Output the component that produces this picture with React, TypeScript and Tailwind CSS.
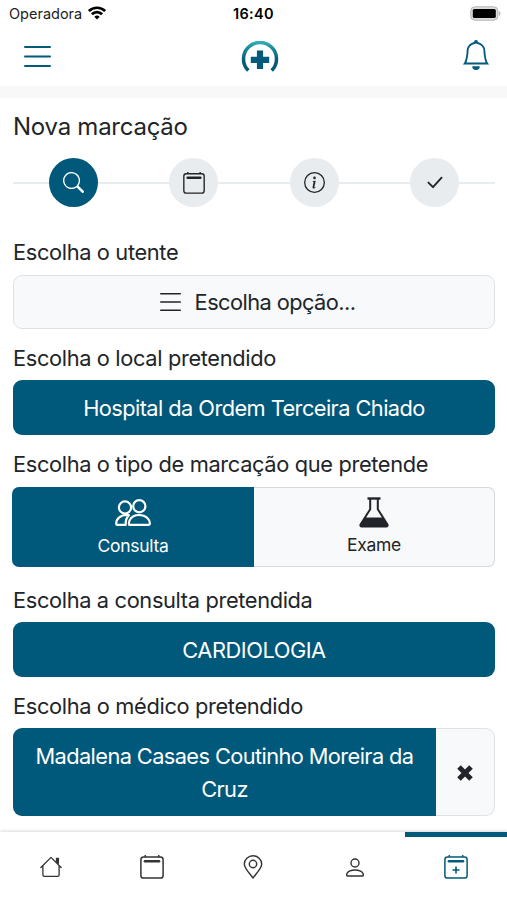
import type { ReactNode } from "react";
import { BsSearch, BsInfoCircle, BsBell } from "react-icons/bs";

function Wifi() {
  return (
    <svg className="-mt-0.5" width="18" height="14" viewBox="0 0 18 14" fill="none" stroke="#000" strokeWidth="2.700">
      <path d="M0.9 5.1a11.5 11.5 0 0 1 16.2 0" />
      <path d="M3.9 8.2a7.2 7.2 0 0 1 10.2 0" />
      <path d="M9 13.6 6.3 10.8a3.9 3.9 0 0 1 5.4 0z" fill="#000" stroke="none" />
    </svg>
  );
}

function Battery() {
  return (
    <svg className="-mt-0.5" width="31" height="15" viewBox="0 0 31 15">
      <rect x="0.8" y="0.8" width="27" height="13.4" rx="4" fill="#ddd" stroke="#b5b5b5" strokeWidth="1" />
      <rect x="2.8" y="2.9" width="23" height="9.2" rx="1.6" fill="#000" />
      <path d="M28.9 5v5c1-.4 1.6-1.4 1.6-2.500S29.900 5.400 28.900 5z" fill="#b5b5b5" />
    </svg>
  );
}

function Lines({ className, width, height, stroke }: { className?: string; width: number; height: number; stroke: number }) {
  const inset = stroke / 2;
  return (
    <svg className={className} width={width} height={height} fill="none" stroke="currentColor" strokeWidth={stroke} strokeLinecap="round">
      <path d={`M${inset} ${inset}H${width - inset}M${inset} ${height / 2}H${width - inset}M${inset} ${height - inset}H${width - inset}`} />
    </svg>
  );
}

function Logo() {
  return (
    <svg width="38" height="32" viewBox="0 0 38 32" fill="none">
      <defs>
        <linearGradient id="arc" x1="19" y1="0" x2="19" y2="20" gradientUnits="userSpaceOnUse">
          <stop offset="0" stopColor="#33b5b5" />
          <stop offset="0.45" stopColor="#168394" />
          <stop offset="1" stopColor="#035a7b" />
        </linearGradient>
      </defs>
      <path d="M7.300 29.600A16.500 16.500 0 1 1 30.700 29.600" stroke="url(#arc)" strokeWidth="3.500" />
      <path d="M15.900 9.600h6.200v6.100h6.100v6.200h-6.100v6.100h-6.200v-6.100H9.800v-6.200h6.100z" fill="#035a7b" />
    </svg>
  );
}

function Calendar({ size, plus = false }: { size: number; plus?: boolean }) {
  return (
    <svg width={size} height={size} viewBox="0 0 24 24" fill="none" stroke="currentColor" strokeWidth="1.500">
      <rect x="0.900" y="1.900" width="22.200" height="21.200" rx="2.600" />
      <path d="M5.300 0v2M18.700 0v2" />
      <path d="M5 6.300h14" strokeWidth="2.600" strokeLinecap="round" />
      {plus && <path d="M12 11.500v7M8.500 15h7" strokeWidth="1.600" />}
    </svg>
  );
}

function Check() {
  return (
    <svg width="16" height="13" viewBox="0 0 16 13" fill="none" stroke="currentColor" strokeWidth="1.900" strokeLinecap="round" strokeLinejoin="round">
      <path d="M1.400 6.600 6 11.200 14.600 1.700" />
    </svg>
  );
}

function People() {
  return (
    <svg width="36" height="28" viewBox="0 0 36 28" fill="none" stroke="currentColor" strokeWidth="2.200" strokeLinejoin="round">
      <circle cx="10" cy="8.500" r="6.100" />
      <circle cx="24.300" cy="7.200" r="6.100" />
      <path d="M14.200 25.900c-.9-2.600.5-6.600 4.200-8.600 1.500-.8 3.300-1.300 5.800-1.300 7 0 10.700 4.600 10.700 8.600 0 .9-.5 1.300-1.300 1.300z" />
      <path d="M13.800 16.100C6 14.700 1.200 20.100 1.200 24.700c0 .8.400 1.200 1.200 1.200h8.300c-.2-4 .7-7.400 3.100-9.800z" />
    </svg>
  );
}

function Flask() {
  return (
    <svg width="30" height="31" viewBox="0 0 30 31" fill="none" stroke="currentColor" strokeLinejoin="round">
      <path d="M8.500 1.500h13" strokeWidth="2.400" />
      <path d="M11.200 2v10.300L1.700 27.200c-.7 1.200-.2 2.300 1.100 2.300h24.400c1.300 0 1.800-1.100 1.100-2.300L18.800 12.300V2" strokeWidth="2" />
      <path d="M6.300 20.600h17.400l5 7.400-1.200 1.700H2.500L1.300 28z" fill="currentColor" stroke="none" />
    </svg>
  );
}

function Cross() {
  return (
    <svg width="16" height="16" viewBox="0 0 16 16" stroke="currentColor" strokeWidth="5">
      <path d="M2 2 14 14M14 2 2 14" />
    </svg>
  );
}

function House() {
  return (
    <svg className="ml-px" width="22" height="22" viewBox="0 0 22 22" fill="none" stroke="currentColor" strokeWidth="1.300" strokeLinecap="round" strokeLinejoin="round">
      <path d="M.9 11.500 11 1.400l10.100 10.100M2.900 10v9.100c0 .8.500 1.300 1.300 1.300h13.600c.8 0 1.300-.5 1.300-1.300V10" />
      <path d="M16.500 2.300h1.900v5l-1.900-1.900z" fill="currentColor" />
    </svg>
  );
}

function Pin() {
  return (
    <svg width="20" height="24" viewBox="0 0 20 24" fill="none" stroke="currentColor" strokeWidth="1.400" strokeLinejoin="round">
      <path d="M10 23C7 18.600 1.300 13.600 1.300 9a8.700 8.300 0 0 1 17.400 0C18.700 13.600 13 18.600 10 23z" />
      <circle cx="10" cy="9" r="3.700" />
    </svg>
  );
}

function Person() {
  return (
    <svg width="18" height="19" viewBox="0 0 18 19" fill="none" stroke="currentColor" strokeWidth="1.400" strokeLinejoin="round">
      <circle cx="9" cy="5" r="4" />
      <path d="M1.700 18C.3 18 .5 16.500 1.200 15.200 2.500 12.900 5.500 12 9 12s6.500.9 7.800 3.200c.7 1.300.9 2.800-.5 2.800z" />
    </svg>
  );
}

function Step({ active = false, children }: { active?: boolean; children: ReactNode }) {
  return (
    <div className={`z-10 flex size-[49px] items-center justify-center rounded-full ${active ? "bg-[#00587a] text-white" : "bg-[#e9ecef] text-[#212529]"}`}>
      {children}
    </div>
  );
}

function Label({ className, children }: { className: string; children: ReactNode }) {
  return <h2 className={`flex h-[30px] shrink-0 items-center text-[21.8px] font-normal tracking-[-0.35px] whitespace-nowrap ${className}`}>{children}</h2>;
}

function Tab({ active = false, children }: { active?: boolean; children: ReactNode }) {
  return (
    <a className={`flex items-center justify-center border-t-[5px] pb-[3px] ${active ? "-ml-px border-[#035a7b] text-[#035a7b]" : "border-transparent"}`}>
      {children}
    </a>
  );
}

export default function App() {
  return (
    <div className="flex h-[900px] w-[507px] flex-col overflow-hidden bg-white font-['Inter','Liberation_Sans',sans-serif] text-[#212529]">
      <div className="grid h-7 shrink-0 grid-cols-3 items-center pr-[6px] pl-[9px] text-[14.5px] text-[#222]">
        <div className="flex items-center gap-[6px]">
          <span>Operadora</span>
          <Wifi />
        </div>
        <span className="-ml-[3px] text-center font-semibold tracking-[0.3px] text-black">16:40</span>
        <div className="flex justify-end"><Battery /></div>
      </div>

      <header className="flex h-[58px] shrink-0 items-center justify-between pr-[16px] pl-6 text-[#035a7b]">
        <Lines className="-mt-[2px]" width={27} height={21} stroke={2} />
        <div className="ml-[7px]"><Logo /></div>
        <BsBell size={30} className="-mt-1" />
      </header>
      <div className="h-3 shrink-0 bg-[#f8f8f8]" />

      <main className="flex min-h-0 flex-1 flex-col pr-[12px] pl-[13px]">
        <h1 className="mt-[11px] h-9 shrink-0 text-[24px] leading-9 font-normal tracking-[-0.25px]">Nova marcação</h1>
        <div className="mt-[13px] grid h-[49px] shrink-0 grid-cols-4 place-items-center bg-[linear-gradient(#e9ecef,#e9ecef)] bg-[length:100%_2px] bg-center bg-no-repeat">
          <Step active><BsSearch size={21} /></Step>
          <Step><Calendar size={22} /></Step>
          <Step><BsInfoCircle size={21} /></Step>
          <Step><Check /></Step>
        </div>

        <Label className="mt-[30px]">Escolha o utente</Label>
        <button className="mt-[8px] flex h-[54px] shrink-0 items-center justify-center gap-[14px] rounded-[9px] border-[1.5px] border-[#dee2e6] bg-[#f8f9fa] pl-[7px] text-[21.8px]">
          <Lines width={21} height={18} stroke={1.5} />
          <span className="tracking-[-0.57px]">Escolha opção...</span>
        </button>

        <Label className="mt-[14px]">Escolha o local pretendido</Label>
        <button className="mt-[7px] h-[55px] shrink-0 rounded-[9px] bg-[#00587a] pt-[2px] text-[21.8px] tracking-[-0.57px] text-white">
          Hospital da Ordem Terceira Chiado
        </button>

        <Label className="mt-[14px]">Escolha o tipo de marcação que pretende</Label>
        <div className="mt-[8px] -ml-px flex h-[80px] shrink-0 text-[17.5px] tracking-[-0.3px]">
          <button className="flex w-[242px] flex-col items-center rounded-l-[7px] bg-[#00587a] pt-[12px] text-white">
            <People />
            <span className="mt-[7px] leading-6">Consulta</span>
          </button>
          <button className="flex flex-1 flex-col items-center rounded-r-[7px] border border-l-0 border-[#d5d8dd] bg-[#f8f9fa] pt-[8.500px]">
            <Flask />
            <span className="mt-[5.500px] leading-6">Exame</span>
          </button>
        </div>

        <Label className="mt-[18px]">Escolha a consulta pretendida</Label>
        <button className="mt-[7px] h-[55px] shrink-0 rounded-[9px] bg-[#00587a] pt-[2px] text-[21.8px] tracking-[-0.45px] text-white">CARDIOLOGIA</button>

        <Label className="mt-[14px]">Escolha o médico pretendido</Label>
        <div className="mt-[7px] flex h-[88px] shrink-0">
          <button className="w-[423px] rounded-l-[9px] bg-[#00587a] pt-[2px] text-[21.8px] leading-[33px] tracking-[-0.6px] text-white">
            Madalena Casaes Coutinho Moreira da
            <br />
            Cruz
          </button>
          <button className="flex flex-1 items-center justify-center rounded-r-[9px] border-[1.5px] border-l-0 border-[#dee2e6] bg-[#f8f9fa] pt-[2px]">
            <Cross />
          </button>
        </div>
      </main>

      <nav className="grid h-[68px] shrink-0 grid-cols-5 bg-white text-[#333] shadow-[0_-1px_3px_rgba(0,0,0,0.15)]">
        <Tab><House /></Tab>
        <Tab><Calendar size={24} /></Tab>
        <Tab><Pin /></Tab>
        <Tab><Person /></Tab>
        <Tab active><Calendar size={24} plus /></Tab>
      </nav>
    </div>
  );
}
